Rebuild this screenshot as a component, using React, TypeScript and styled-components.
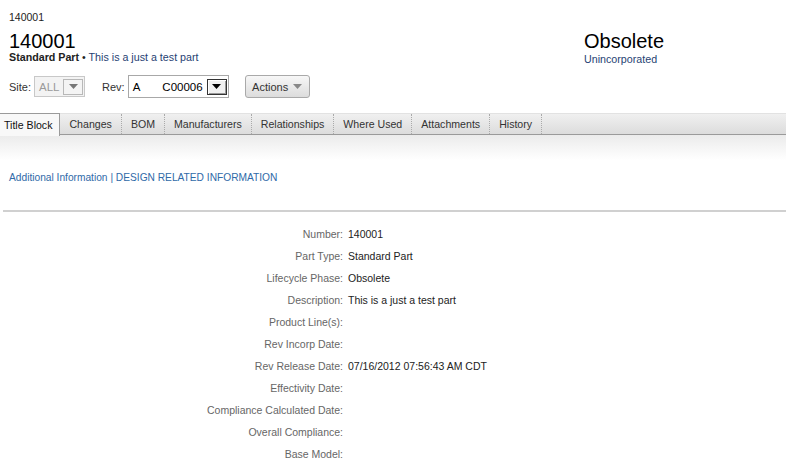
import React from 'react';
import styled, { createGlobalStyle } from 'styled-components';

const GlobalStyle = createGlobalStyle`
  body {
    margin: 0;
    background: #fff;
    font-family: "Liberation Sans", Arial, sans-serif;
    font-size: 10.5px;
    color: #222;
  }
`;

const tabs = ['Title Block', 'Changes', 'BOM', 'Manufacturers', 'Relationships', 'Where Used', 'Attachments', 'History'];

const fields: [string, string][] = [
  ['Number:', '140001'],
  ['Part Type:', 'Standard Part'],
  ['Lifecycle Phase:', 'Obsolete'],
  ['Description:', 'This is a just a test part'],
  ['Product Line(s):', ''],
  ['Rev Incorp Date:', ''],
  ['Rev Release Date:', '07/16/2012 07:56:43 AM CDT'],
  ['Effectivity Date:', ''],
  ['Compliance Calculated Date:', ''],
  ['Overall Compliance:', ''],
  ['Base Model:', ''],
];

const Arrow: React.FC<{ color: string }> = ({ color }) => (
  <svg width="9" height="5" viewBox="0 0 9 5">
    <path d="M0 0h9L4.5 5z" fill={color} />
  </svg>
);

const App: React.FC = () => (
  <Page>
    <GlobalStyle />
    <Header>
      <TopId>140001</TopId>
      <HeaderRow>
        <div>
          <Title>140001</Title>
          <Subtitle>
            <strong>Standard Part</strong> • <Desc>This is a just a test part</Desc>
          </Subtitle>
        </div>
        <div>
          <Title>Obsolete</Title>
          <Status>Unincorporated</Status>
        </div>
      </HeaderRow>
      <Controls>
        <Label>Site:</Label>
        <Select disabled width={51}>
          <SelectText disabled>ALL</SelectText>
          <DropButton disabled>
            <Arrow color="#777" />
          </DropButton>
        </Select>
        <Label gap={17}>Rev:</Label>
        <Select width={101}>
          <SelectText>A</SelectText>
          <RevNumber>C00006</RevNumber>
          <DropButton>
            <Arrow color="#000" />
          </DropButton>
        </Select>
        <ActionButton>
          Actions
          <Arrow color="#888" />
        </ActionButton>
      </Controls>
    </Header>

    <TabBar>
      {tabs.map((t, i) => (
        <Tab key={t} active={i === 0}>{t}</Tab>
      ))}
    </TabBar>

    <Content>
      <Links>
        <a>Additional Information</a> | <a>DESIGN RELATED INFORMATION</a>
      </Links>
      <Divider />
      <FieldGrid>
        {fields.map(([label, value]) => (
          <React.Fragment key={label}>
            <FieldLabel>{label}</FieldLabel>
            <FieldValue>{value}</FieldValue>
          </React.Fragment>
        ))}
      </FieldGrid>
    </Content>
  </Page>
);

const Page = styled.div`
  width: 786px;
`;

const Header = styled.div`
  padding: 10px 0 0 9px;
`;

const TopId = styled.div`
  line-height: 14px;
  color: #222;
`;

const HeaderRow = styled.div`
  display: grid;
  grid-template-columns: 575px 1fr;
  margin-top: 7px;
`;

const Title = styled.div`
  font-size: 20px;
  line-height: 20px;
  color: #000;
`;

const Subtitle = styled.div`
  font-size: 10.7px;
  line-height: 12px;
  color: #222;

  strong {
    font-weight: bold;
  }
`;

const Desc = styled.span`
  color: #1f3f73;
`;

const Status = styled.div`
  font-size: 10.7px;
  line-height: 14px;
  margin-top: 1px;
  color: #1f3f73;
`;

const Controls = styled.div`
  display: flex;
  align-items: center;
  height: 23px;
  margin-top: 9px;
`;

const Label = styled.span<{ gap?: number }>`
  font-size: 11px;
  color: #333;
  margin-left: ${({ gap }) => gap || 0}px;
  margin-right: 3px;
`;

const Select = styled.div<{ width: number; disabled?: boolean }>`
  box-sizing: border-box;
  width: ${({ width }) => width}px;
  height: ${({ disabled }) => (disabled ? 21 : 23)}px;
  display: flex;
  align-items: center;
  padding: 0 1px 0 4px;
  border: 1px solid ${({ disabled }) => (disabled ? '#c8c8c8' : '#a8a8a8')};
  background: ${({ disabled }) => (disabled ? '#f3f3f3' : '#fff')};
`;

const SelectText = styled.span<{ disabled?: boolean }>`
  font-size: 11.5px;
  color: ${({ disabled }) => (disabled ? '#9a9a9a' : '#000')};
  flex: 1;
`;

const RevNumber = styled.span`
  font-size: 11.5px;
  color: #000;
  margin-right: 4px;
`;

const DropButton = styled.div<{ disabled?: boolean }>`
  box-sizing: border-box;
  width: 20px;
  height: 16px;
  display: flex;
  align-items: center;
  justify-content: center;
  background: ${({ disabled }) => (disabled ? '#f4f4f4' : '#f0f0f0')};
  border: 1px solid ${({ disabled }) => (disabled ? '#b8b8b8' : '#333')};
  box-shadow: ${({ disabled }) => (disabled ? 'none' : 'inset 1px 1px 0 #fff, inset -1px -1px 0 #999')};
`;

const ActionButton = styled.div`
  box-sizing: border-box;
  margin-left: 16px;
  width: 65px;
  height: 23px;
  display: flex;
  align-items: center;
  justify-content: center;
  gap: 5px;
  border: 1px solid #a9a9a9;
  border-radius: 3px;
  background: linear-gradient(#f7f7f7, #dcdcdc);
  color: #333;
  font-size: 11px;
`;

const TabBar = styled.div`
  display: flex;
  margin-top: 15px;
  height: 20px;
  border-top: 1px solid #e2e2e2;
  border-bottom: 1px solid #9a9a9a;
  background: linear-gradient(#f0f0f0, #dcdcdc);
`;

const Tab = styled.div<{ active?: boolean }>`
  position: relative;
  z-index: 1;
  display: flex;
  align-items: center;
  height: ${({ active }) => (active ? 22 : 20)}px;
  margin-top: ${({ active }) => (active ? -1 : 0)}px;
  padding: ${({ active }) => (active ? '0 7px 0 4px' : '0 9px')};
  font-size: 10.6px;
  color: ${({ active }) => (active ? '#111' : '#333')};
  background: ${({ active }) => (active ? '#f8f8f8' : 'transparent')};
  border-top: ${({ active }) => (active ? '1px solid #9a9a9a' : 'none')};
  border-right: ${({ active }) => (active ? '1px solid #9a9a9a' : '1px dotted #aaa')};
`;

const Content = styled.div`
  background: linear-gradient(#ebebeb, #fff 25px);
  padding-top: 36px;
`;

const Links = styled.div`
  padding-left: 9px;
  font-size: 10.2px;
  line-height: 14px;
  color: #2f6aa8;

  a {
    color: #2f6aa8;
    text-decoration: none;
  }
`;

const Divider = styled.div`
  margin: 25px 0 0 3px;
  height: 2px;
  background: #d0d0d0;
`;

const FieldGrid = styled.div`
  display: grid;
  grid-template-columns: 348px 1fr;
  grid-auto-rows: 22px;
  margin-top: 11px;
  align-items: center;
`;

const FieldLabel = styled.div`
  text-align: right;
  color: #666;
  padding-right: 5px;
`;

const FieldValue = styled.div`
  color: #222;
`;

export default App;
